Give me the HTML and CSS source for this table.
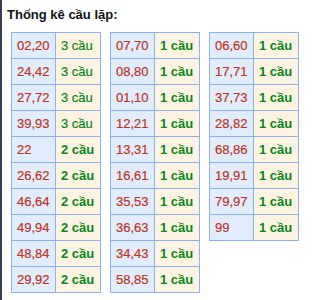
FILE: index.html
```html
<!DOCTYPE html>
<html lang="vi">
<head>
<meta charset="utf-8">
<title>Thống kê cầu lặp</title>
<link rel="stylesheet" href="styles.css">
</head>
<body>
<div class="page">
  <h3 class="title">Thống kê cầu lặp:</h3>
  <div class="tables">
    <div class="tbl">
      <div class="num">02,20</div><div class="cnt reg">3 cầu</div>
      <div class="num">24,42</div><div class="cnt reg">3 cầu</div>
      <div class="num">27,72</div><div class="cnt reg">3 cầu</div>
      <div class="num">39,93</div><div class="cnt reg">3 cầu</div>
      <div class="num">22</div><div class="cnt">2 cầu</div>
      <div class="num">26,62</div><div class="cnt">2 cầu</div>
      <div class="num">46,64</div><div class="cnt">2 cầu</div>
      <div class="num">49,94</div><div class="cnt">2 cầu</div>
      <div class="num">48,84</div><div class="cnt">2 cầu</div>
      <div class="num">29,92</div><div class="cnt">2 cầu</div>
    </div>
    <div class="tbl">
      <div class="num">07,70</div><div class="cnt">1 cầu</div>
      <div class="num">08,80</div><div class="cnt">1 cầu</div>
      <div class="num">01,10</div><div class="cnt">1 cầu</div>
      <div class="num">12,21</div><div class="cnt">1 cầu</div>
      <div class="num">13,31</div><div class="cnt">1 cầu</div>
      <div class="num">16,61</div><div class="cnt">1 cầu</div>
      <div class="num">35,53</div><div class="cnt">1 cầu</div>
      <div class="num">36,63</div><div class="cnt">1 cầu</div>
      <div class="num">34,43</div><div class="cnt">1 cầu</div>
      <div class="num">58,85</div><div class="cnt">1 cầu</div>
    </div>
    <div class="tbl">
      <div class="num">06,60</div><div class="cnt">1 cầu</div>
      <div class="num">17,71</div><div class="cnt">1 cầu</div>
      <div class="num">37,73</div><div class="cnt">1 cầu</div>
      <div class="num">28,82</div><div class="cnt">1 cầu</div>
      <div class="num">68,86</div><div class="cnt">1 cầu</div>
      <div class="num">19,91</div><div class="cnt">1 cầu</div>
      <div class="num">79,97</div><div class="cnt">1 cầu</div>
      <div class="num">99</div><div class="cnt">1 cầu</div>
    </div>
  </div>
</div>
</body>
</html>
```

FILE: styles.css
```css
html, body {
  margin: 0;
  padding: 0;
  background: #ffffff;
}
.page {
  border-left: 2px solid #363c52;
  min-height: 300px;
  box-sizing: border-box;
  font-family: "Liberation Sans", Arial, sans-serif;
  padding: 7px 0 0 5px;
}
.title {
  margin: 0;
  font-size: 13px;
  line-height: 16px;
  font-weight: bold;
  color: #111111;
}
.tables {
  display: flex;
  align-items: flex-start;
  gap: 9px;
  margin: 9px 0 0 4px;
}
.tbl {
  display: grid;
  grid-template-columns: 43px 44px;
  grid-auto-rows: 25px;
  gap: 1px;
  background: #8fb0f2;
  border: 1px solid #8fb0f2;
}
.num, .cnt {
  display: flex;
  align-items: center;
  padding-left: 5px;
  font-size: 13px;
}
.num {
  background: #e1edfc;
  color: #c0331f;
  -webkit-text-stroke: 0.2px currentColor;
}
.cnt {
  background: #fdf3e2;
  color: #08871a;
  font-weight: bold;
}
.cnt.reg {
  font-weight: normal;
  -webkit-text-stroke: 0.2px currentColor;
}
```
